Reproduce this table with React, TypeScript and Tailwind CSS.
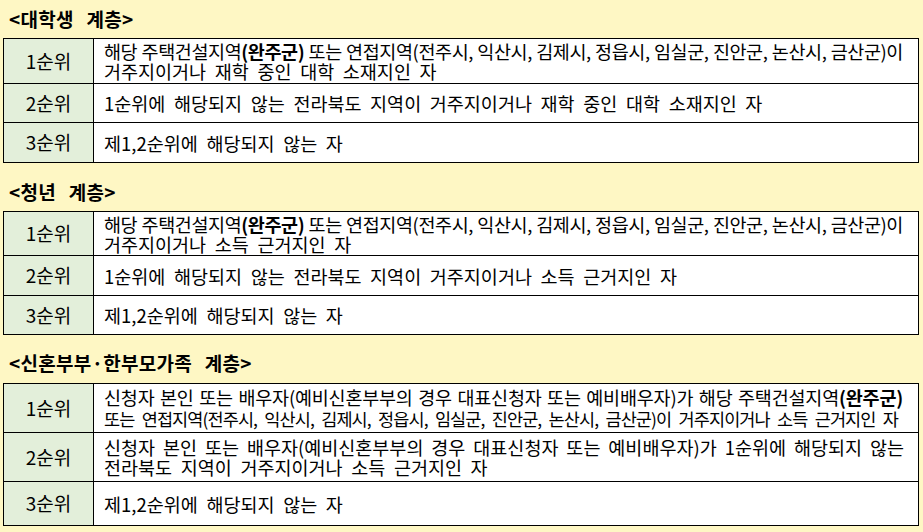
import React from "react";

type Line = { text: React.ReactNode; w?: number; ls?: string };
type Row = { rank: string; h: number; lines: Line[]; lh?: string };

const Wanju = () => <b className="font-bold">(완주군)</b>;

// full lines are stretched to the reference width, short ones flow naturally
const groups: { title: string; rows: Row[] }[] = [
  {
    title: "<대학생 계층>",
    rows: [
      {
        rank: "1순위",
        h: 44,
        lines: [
          {
            text: (
              <>
                해당 주택건설지역<Wanju /> 또는 연접지역(전주시, 익산시, 김제시, 정읍시, 임실군, 진안군, 논산시, 금산군)이
              </>
            ),
            w: 799,
            ls: "tracking-[-0.4px]",
          },
          { text: "거주지이거나 재학 중인 대학 소재지인 자" },
        ],
      },
      {
        rank: "2순위",
        h: 38,
        lines: [{ text: "1순위에 해당되지 않는 전라북도 지역이 거주지이거나 재학 중인 대학 소재지인 자" }],
      },
      { rank: "3순위", h: 39, lines: [{ text: "제1,2순위에 해당되지 않는 자" }] },
    ],
  },
  {
    title: "<청년 계층>",
    rows: [
      {
        rank: "1순위",
        h: 43,
        lines: [
          {
            text: (
              <>
                해당 주택건설지역<Wanju /> 또는 연접지역(전주시, 익산시, 김제시, 정읍시, 임실군, 진안군, 논산시, 금산군)이
              </>
            ),
            w: 799,
            ls: "tracking-[-0.4px]",
          },
          { text: "거주지이거나 소득 근거지인 자" },
        ],
      },
      {
        rank: "2순위",
        h: 39,
        lines: [{ text: "1순위에 해당되지 않는 전라북도 지역이 거주지이거나 소득 근거지인 자" }],
      },
      { rank: "3순위", h: 38, lines: [{ text: "제1,2순위에 해당되지 않는 자" }] },
    ],
  },
  {
    title: "<신혼부부·한부모가족 계층>",
    rows: [
      {
        rank: "1순위",
        h: 48,
        lh: "leading-[22px]",
        lines: [
          {
            text: (
              <>
                신청자 본인 또는 배우자(예비신혼부부의 경우 대표신청자 또는 예비배우자)가 해당 주택건설지역<Wanju />
              </>
            ),
            w: 799,
            ls: "tracking-[-0.2px]",
          },
          {
            text: "또는 연접지역(전주시, 익산시, 김제시, 정읍시, 임실군, 진안군, 논산시, 금산군)이 거주지이거나 소득 근거지인 자",
            w: 794,
            ls: "text-[17.5px] tracking-[-0.9px]",
          },
        ],
      },
      {
        rank: "2순위",
        h: 48,
        lines: [
          {
            text: "신청자 본인 또는 배우자(예비신혼부부의 경우 대표신청자 또는 예비배우자)가 1순위에 해당되지 않는",
            w: 800,
          },
          { text: "전라북도 지역이 거주지이거나 소득 근거지인 자" },
        ],
      },
      { rank: "3순위", h: 43, lines: [{ text: "제1,2순위에 해당되지 않는 자" }] },
    ],
  },
];

const headTops = ["mt-[7px]", "mt-[17px]", "mt-[16px]"];
const tableTops = ["mt-[7px]", "mt-[7px]", "mt-[8px]"];

export default function App() {
  return (
    <div
      className="w-[923px] h-[532px] overflow-hidden bg-[#fef7c4] text-black"
      style={{ fontFamily: '"Noto Sans CJK KR", "Noto Sans", sans-serif' }}
    >
      {groups.map((g, gi) => (
        <section key={g.title}>
          <h2
            className={`${headTops[gi]} pl-[9px] h-[24px] leading-[24px] text-[19px] font-bold tracking-[0.3px] [word-spacing:8px]`}
          >
            {g.title}
          </h2>
          <div className={`${tableTops[gi]} ml-[3px] w-[916px] border border-black bg-white`}>
            {g.rows.map((r, ri) => (
              <div
                key={r.rank}
                className={`flex ${ri > 0 ? "border-t border-black" : ""}`}
                style={{ height: r.h + (ri > 0 ? 1 : 0) }}
              >
                <div className="w-[90px] shrink-0 border-r border-black bg-[#e3efda] flex items-center justify-center text-[19px]">
                  {r.rank}
                </div>
                <div
                  className={`flex-1 flex flex-col justify-center pl-[10px] text-[18.5px] ${r.lh ?? "leading-[20px]"}`}
                >
                  {r.lines.map((l, li) =>
                    l.w ? (
                      <div
                        key={li}
                        className={`text-justify [text-align-last:justify] ${l.ls ?? "tracking-[0px]"}`}
                        style={{ width: l.w }}
                      >
                        {l.text}
                      </div>
                    ) : (
                      <div key={li} className="whitespace-nowrap [word-spacing:4.5px]">
                        {l.text}
                      </div>
                    )
                  )}
                </div>
              </div>
            ))}
          </div>
        </section>
      ))}
    </div>
  );
}
